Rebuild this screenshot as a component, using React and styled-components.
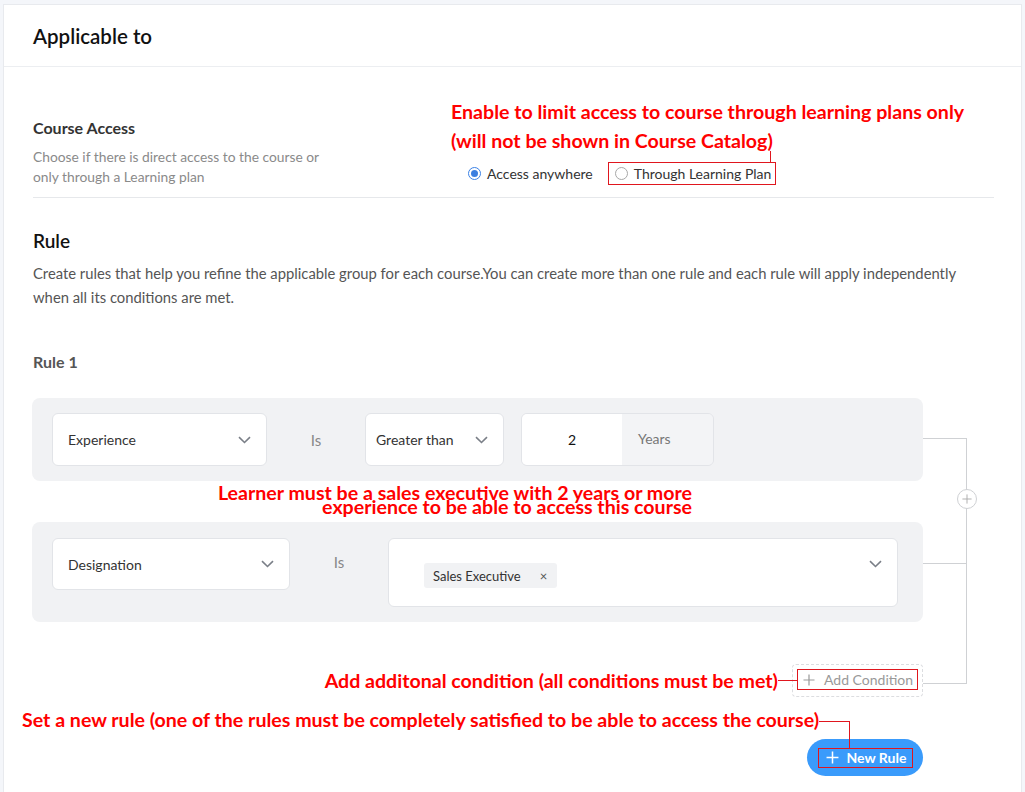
import React from 'react';
import styled, { createGlobalStyle } from 'styled-components';

const GlobalStyle = createGlobalStyle`
    html, body {
        margin: 0;
        background: #f4f6fa;
        font-family: Lato, "Open Sans", sans-serif;
    }
`;

const RED_LINE = '#e0161e';

const Card = styled.div`
    margin: 4px 3px 0 3px;
    min-height: 820px;
    background: #fff;
    border: 1px solid #e8eaee;
    border-bottom: none;
`;

const Header = styled.div`
    box-sizing: border-box;
    height: 62px;
    padding: 0 29px;
    display: flex;
    align-items: center;
    border-bottom: 1px solid #eceef1;
`;

const Title = styled.h1`
    margin: 0;
    font-size: 20.5px;
    font-weight: 600;
    color: #111;
`;

const Body = styled.div`
    padding: 0 27px 0 29px;
`;

const AccessSection = styled.div`
    display: flex;
    align-items: flex-end;
    padding: 30px 0 12px;
    border-bottom: 1px solid #e6e8eb;
`;

const AccessInfo = styled.div`
    width: 418px;
    flex-shrink: 0;
    margin-bottom: -2px;
`;

const Label = styled.div`
    font-size: 16px;
    line-height: 20px;
    font-weight: 700;
    color: ${(p) => p.color || '#333'};
`;

const Hint = styled.p`
    margin: 9px 0 0;
    font-size: 13.8px;
    line-height: 20px;
    color: #8a8a8a;
`;

const AccessChoice = styled.div`
    display: flex;
    flex-direction: column;
`;

const Note = styled.div`
    font-family: Lato, sans-serif;
    font-weight: 700;
    color: #ff0000;
    font-size: 19.6px;
    line-height: ${(p) => p.lh || 29}px;
    white-space: nowrap;
`;

const RadioRow = styled.div`
    display: flex;
    align-items: center;
    margin-top: 7px;
    padding-left: 17px;
    gap: 15px;
`;

const RadioItem = styled.label`
    position: relative;
    box-sizing: border-box;
    height: 23px;
    display: flex;
    align-items: center;
    gap: 6px;
    font-size: 14px;
    color: #333;
    padding: ${(p) => (p.boxed ? '0 4px 0 6px' : '0')};
    border: ${(p) => (p.boxed ? `1px solid ${RED_LINE}` : 'none')};

    ${(p) =>
        p.boxed &&
        `&::before {
            content: '';
            position: absolute;
            right: 4px;
            top: -12px;
            width: 1px;
            height: 11px;
            background: ${RED_LINE};
        }`}
`;

const RadioDot = styled.span`
    box-sizing: border-box;
    width: 13px;
    height: 13px;
    border-radius: 50%;
    border: 1px solid ${(p) => (p.checked ? '#3b82e6' : '#a8a8a8')};
    display: flex;
    align-items: center;
    justify-content: center;

    &::after {
        content: '';
        width: 7px;
        height: 7px;
        border-radius: 50%;
        background: ${(p) => (p.checked ? '#3b7fe0' : 'transparent')};
    }
`;

const RuleSection = styled.div`
    padding-top: 31px;
`;

const SubTitle = styled.h2`
    margin: 0;
    font-size: 19px;
    line-height: 24px;
    font-weight: 600;
    color: #111;
`;

const Description = styled.p`
    margin: 8px 0 0;
    font-size: 14.8px;
    line-height: 24px;
    color: #555;
`;

const RuleName = styled(Label)`
    margin-top: 43px;
`;

const RuleArea = styled.div`
    position: relative;
    margin: 26px 0 0 -1px;
    width: 891px;
`;

const ConditionBlock = styled.div`
    display: flex;
    align-items: ${(p) => p.align || 'center'};
    padding: ${(p) => p.pad || '15px 20px'};
    background: #f1f2f4;
    border-radius: 8px;
`;

const Select = styled.div`
    box-sizing: border-box;
    width: ${(p) => p.w}px;
    height: ${(p) => p.h || 53}px;
    padding: 0 15px 0 ${(p) => p.pl || 15}px;
    display: flex;
    align-items: center;
    justify-content: space-between;
    background: #fff;
    border: 1px solid #e2e4e8;
    border-radius: 6px;
    font-size: 14px;
    color: #333;
`;

const Operator = styled.div`
    width: 98px;
    flex-shrink: 0;
    text-align: center;
    font-size: 15px;
    color: #888;
    line-height: ${(p) => p.lh || 48}px;
`;

const NumberField = styled.div`
    box-sizing: border-box;
    width: 193px;
    height: 53px;
    margin-left: 17px;
    display: flex;
    border: 1px solid #e2e4e8;
    border-radius: 6px;
    overflow: hidden;
`;

const NumberValue = styled.div`
    width: 100px;
    display: flex;
    align-items: center;
    justify-content: center;
    background: #fff;
    font-size: 14px;
    color: #111;
`;

const Unit = styled.div`
    flex: 1;
    display: flex;
    align-items: center;
    padding: 0 0 2px 16px;
    background: #f3f4f6;
    font-size: 14px;
    color: #777;
`;

const MultiSelect = styled.div`
    box-sizing: border-box;
    width: 510px;
    height: 69px;
    padding: 24px 15px 0 35px;
    display: flex;
    align-items: flex-start;
    justify-content: space-between;
    background: #fff;
    border: 1px solid #e2e4e8;
    border-radius: 6px;
`;

const Tag = styled.span`
    height: 25px;
    display: flex;
    align-items: center;
    gap: 19px;
    padding: 0 10px 0 9px;
    background: #f1f2f4;
    border-radius: 3px;
    font-size: 13px;
    color: #333;

    span {
        font-size: 13px;
        color: #555;
    }
`;

const ChevronWrap = styled.span`
    display: flex;
    margin-top: ${(p) => p.mt || 0}px;
`;

const BetweenNote = styled.div`
    box-sizing: border-box;
    width: 660px;
    height: 41px;
    padding-top: 5px;
    display: flex;
    flex-direction: column;
    align-items: flex-end;
`;

const Connector = styled.div`
    position: absolute;
    left: 891px;
    top: 40px;
    width: 44px;
    height: 246px;
    border: 1px solid #cfd1d4;
    border-left: none;
    box-sizing: border-box;

    &::after {
        content: '';
        position: absolute;
        left: 0;
        right: 0;
        top: 124px;
        height: 1px;
        background: #cfd1d4;
    }
`;

const JoinButton = styled.span`
    position: absolute;
    right: -11px;
    top: 50px;
    width: 20px;
    height: 20px;
    box-sizing: border-box;
    border: 1px solid #cfd1d4;
    border-radius: 50%;
    background: #fff;
    display: flex;
    align-items: center;
    justify-content: center;
`;

const AddRow = styled.div`
    display: flex;
    align-items: center;
    justify-content: flex-end;
    margin-top: 42px;
`;

const Leader = styled.span`
    width: 19px;
    height: 1px;
    background: ${RED_LINE};
    margin-right: -5px;
    position: relative;
    z-index: 1;
`;

const DashedBox = styled.div`
    padding: 4px 4px 6px;
    border: 1px dashed #dcdde0;
    border-radius: 4px;
`;

const HighlightBox = styled.div`
    box-sizing: border-box;
    height: ${(p) => p.h || 21}px;
    width: ${(p) => p.w}px;
    display: flex;
    align-items: center;
    gap: ${(p) => p.gap || 9}px;
    padding-left: ${(p) => p.pl || 5}px;
    border: 1px solid ${RED_LINE};
    font-size: 14px;
    color: ${(p) => p.color || '#999'};
    font-weight: ${(p) => p.weight || 400};
`;

const NewRuleNote = styled.div`
    display: flex;
    align-items: flex-start;
    margin: 11px 0 0 -10px;
`;

const ElbowLeader = styled.span`
    position: relative;
    z-index: 1;
    width: 30px;
    height: 26px;
    margin-top: 13px;
    margin-bottom: -15px;
    border-top: 1px solid ${RED_LINE};
    border-right: 1px solid ${RED_LINE};
`;

const ButtonRow = styled.div`
    display: flex;
    justify-content: flex-end;
    margin-top: 6px;
`;

const PrimaryButton = styled.button`
    width: 116px;
    height: 37px;
    border: none;
    border-radius: 19px;
    background: #3a9bfb;
    display: flex;
    align-items: center;
    justify-content: center;
    padding: 0;
    font-family: Lato, sans-serif;
`;

const Chevron = () => (
    <svg width="13" height="8" viewBox="0 0 13 8" fill="none">
        <path d="M1 1.2l5.5 5.3L12 1.2" stroke="#7a7f87" strokeWidth="1.6" />
    </svg>
);

const Plus = ({ size = 12, color = '#999', stroke = 1.2 }) => (
    <svg width={size} height={size} viewBox="0 0 12 12" fill="none">
        <path d="M6 0.5v11M0.5 6h11" stroke={color} strokeWidth={stroke} />
    </svg>
);

const App = () => (
    <>
        <GlobalStyle />
        <Card>
            <Header>
                <Title>Applicable to</Title>
            </Header>
            <Body>
                <AccessSection>
                    <AccessInfo>
                        <Label>Course Access</Label>
                        <Hint>
                            Choose if there is direct access to the course or
                            <br />
                            only through a Learning plan
                        </Hint>
                    </AccessInfo>
                    <AccessChoice>
                        <Note>Enable to limit access to course through learning plans only</Note>
                        <Note>(will not be shown in Course Catalog)</Note>
                        <RadioRow>
                            <RadioItem>
                                <RadioDot checked />
                                Access anywhere
                            </RadioItem>
                            <RadioItem boxed>
                                <RadioDot />
                                Through Learning Plan
                            </RadioItem>
                        </RadioRow>
                    </AccessChoice>
                </AccessSection>

                <RuleSection>
                    <SubTitle>Rule</SubTitle>
                    <Description>
                        Create rules that help you refine the applicable group for each course.You can create more than one rule and each rule will apply independently
                        <br />
                        when all its conditions are met.
                    </Description>
                    <RuleName color="#555">Rule 1</RuleName>

                    <RuleArea>
                        <ConditionBlock>
                            <Select w={215}>
                                Experience
                                <Chevron />
                            </Select>
                            <Operator>Is</Operator>
                            <Select w={139} pl={10}>
                                Greater than
                                <Chevron />
                            </Select>
                            <NumberField>
                                <NumberValue>2</NumberValue>
                                <Unit>Years</Unit>
                            </NumberField>
                        </ConditionBlock>

                        <BetweenNote>
                            <Note lh={14}>Learner must be a sales executive with 2 years or more</Note>
                            <Note lh={14}>experience to be able to access this course</Note>
                        </BetweenNote>

                        <ConditionBlock align="flex-start" pad="16px 20px 15px">
                            <Select w={238} h={52}>
                                Designation
                                <Chevron />
                            </Select>
                            <Operator lh={48}>Is</Operator>
                            <MultiSelect>
                                <Tag>
                                    Sales Executive
                                    <span>×</span>
                                </Tag>
                                <ChevronWrap mt={-3}>
                                    <Chevron />
                                </ChevronWrap>
                            </MultiSelect>
                        </ConditionBlock>

                        <AddRow>
                            <Note lh={24}>Add additonal condition (all conditions must be met)</Note>
                            <Leader />
                            <DashedBox>
                                <HighlightBox w={121}>
                                    <Plus />
                                    Add Condition
                                </HighlightBox>
                            </DashedBox>
                        </AddRow>

                        <Connector>
                            <JoinButton>
                                <Plus size={10} color="#aaa" stroke={1.1} />
                            </JoinButton>
                        </Connector>

                        <NewRuleNote>
                            <Note lh={24}>
                                Set a new rule (one of the rules must be completely satisfied to be able to access the course)
                            </Note>
                            <ElbowLeader />
                        </NewRuleNote>

                        <ButtonRow>
                            <PrimaryButton>
                                <HighlightBox w={95} h={20} pl={7} gap={8} color="#fff" weight={700}>
                                    <Plus size={13} color="#fff" stroke={1.4} />
                                    New Rule
                                </HighlightBox>
                            </PrimaryButton>
                        </ButtonRow>
                    </RuleArea>
                </RuleSection>
            </Body>
        </Card>
    </>
);

export default App;
